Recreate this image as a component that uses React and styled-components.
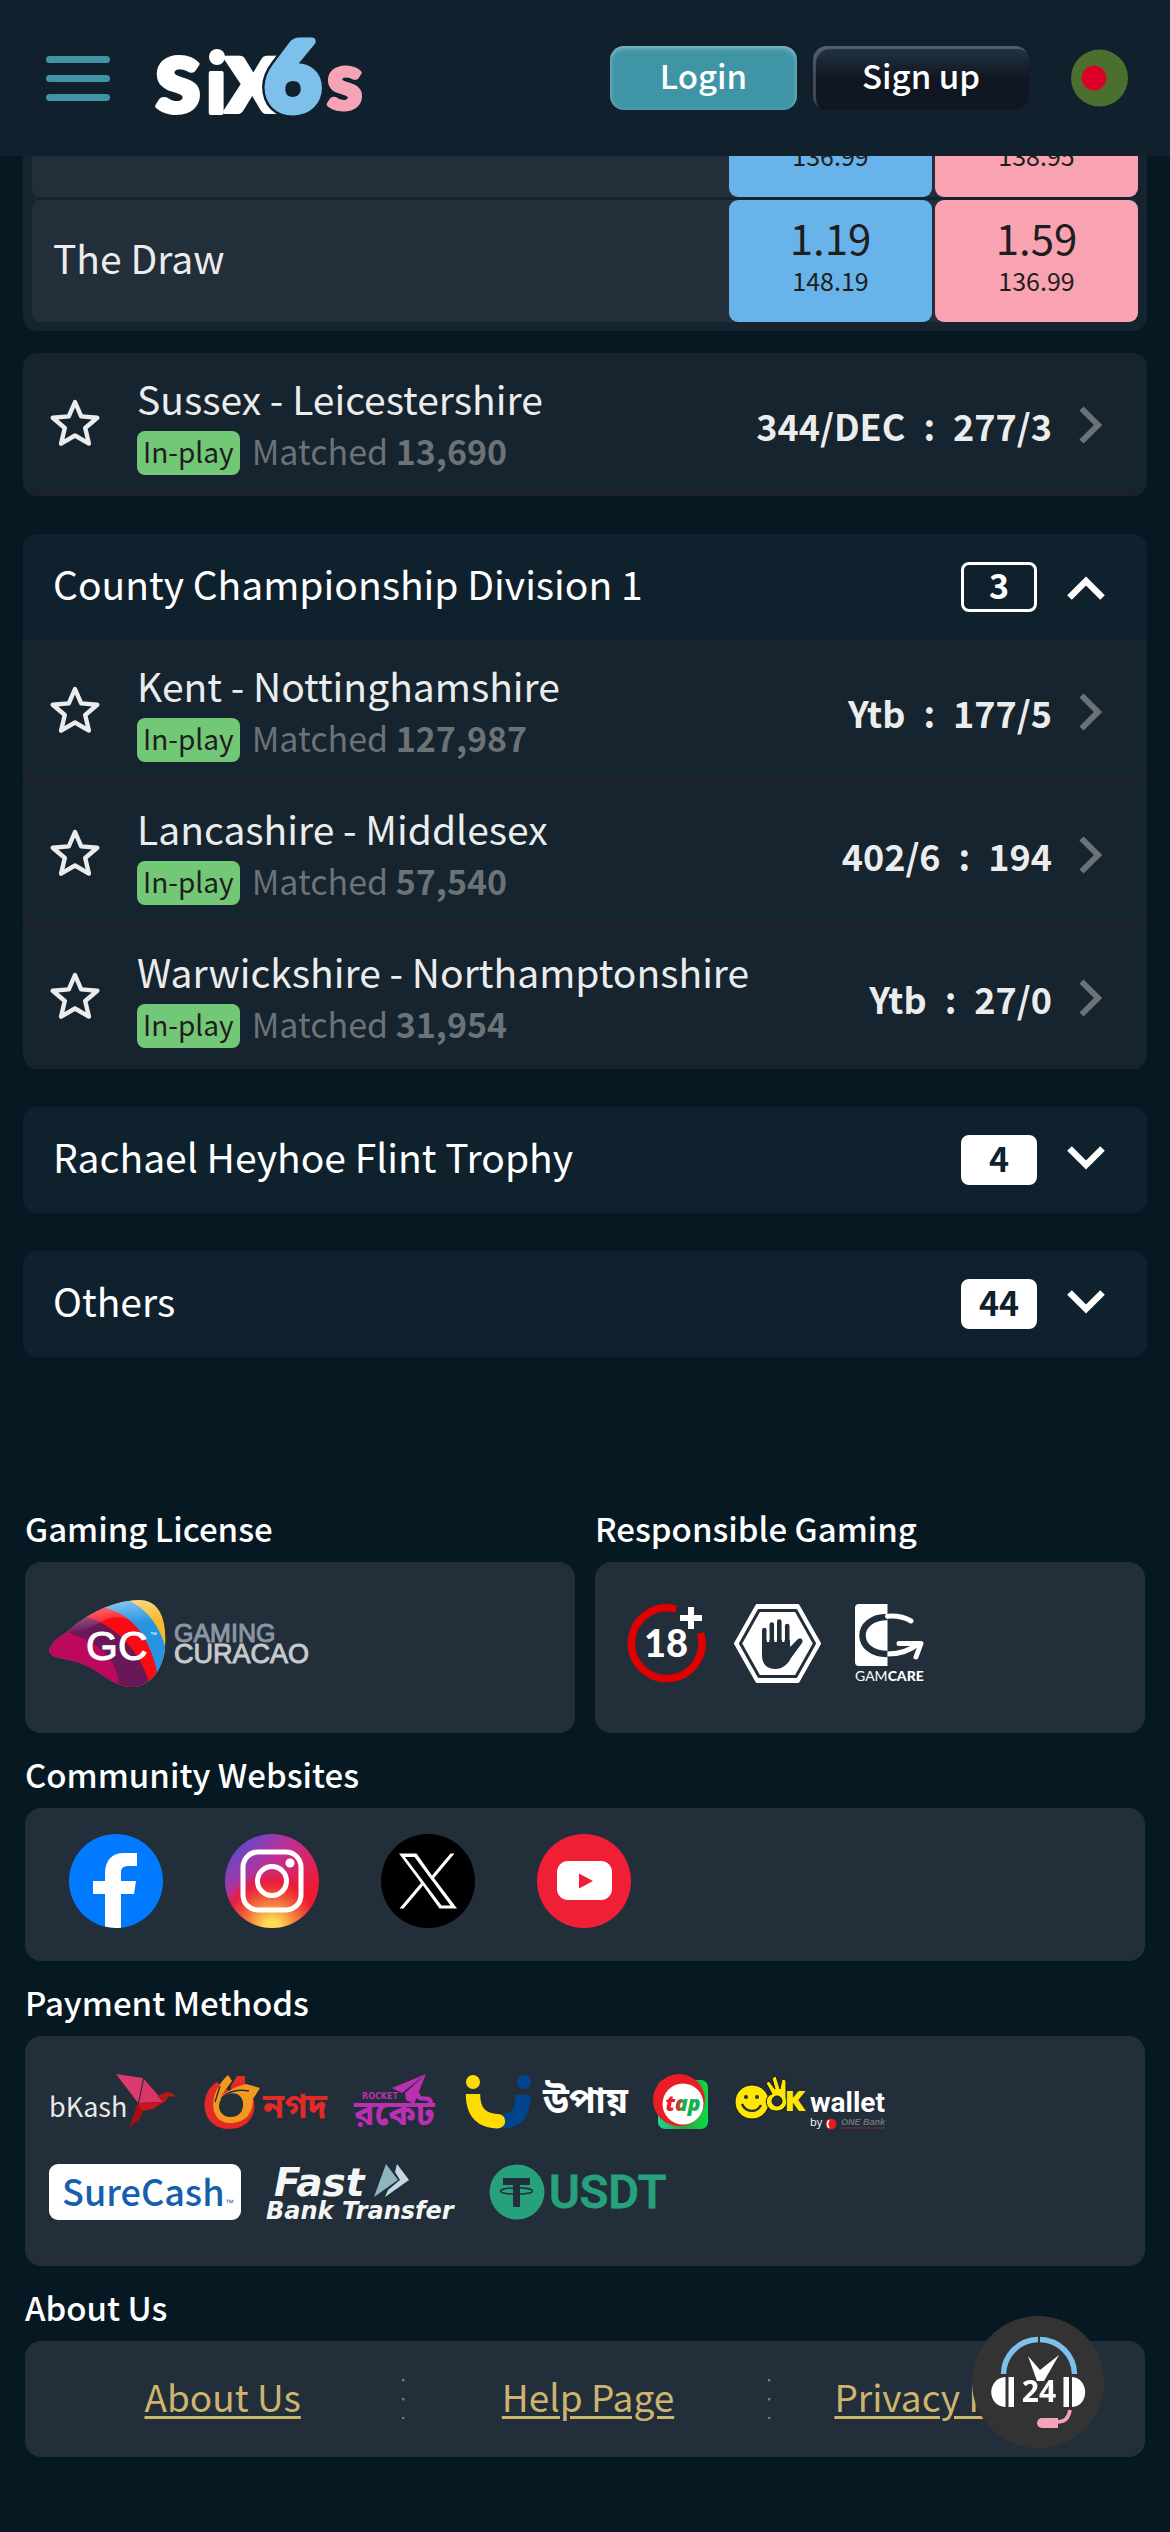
import React, { useState } from 'react';
import styled, { createGlobalStyle } from 'styled-components';

const GlobalStyle = createGlobalStyle`
  * {
    box-sizing: border-box;
  }

  body {
    margin: 0;
    background: #061822;
    color: #ffffff;
    font-family: 'Noto Sans CJK SC', 'Noto Sans', sans-serif;
  }

  button {
    margin: 0;
    padding: 0;
    border: 0;
    background: none;
    color: inherit;
    font: inherit;
    cursor: pointer;
  }

  svg {
    display: block;
    flex: none;
    overflow: visible;
  }
`;

const Header = styled.header`
  position: fixed;
  top: 0;
  left: 0;
  right: 0;
  z-index: 10;
  height: 156px;
  padding: 0 42px 0 46px;
  display: flex;
  align-items: center;
  background: #10212d;
`;

const MenuButton = styled.button`
  width: 64px;
  display: flex;
  flex-direction: column;
  gap: 12px;

  span {
    height: 7px;
    border-radius: 4px;
    background: #3f95a6;
  }
`;

const LogoLink = styled.a`
  margin-left: 46px;
`;

const HeaderActions = styled.div`
  margin-left: auto;
  display: flex;
  align-items: center;
  gap: 16px;
`;

const HeaderButton = styled.button`
  width: ${({ $wide }) => ($wide ? '216px' : '187px')};
  height: 64px;
  padding-bottom: 6px;
  border-radius: 14px;
  font-size: 33px;
  font-weight: 500;
  line-height: 58px;
  background: ${({ $wide }) =>
    $wide ? 'linear-gradient(180deg, #223643 0%, #111722 50%)' : '#3f95a6'};
  box-shadow: ${({ $wide }) =>
    $wide
      ? 'inset 3px 3px 1px rgba(255, 255, 255, 0.22)'
      : 'inset 0 2px 5px rgba(255, 255, 255, 0.4)'};
`;

const LanguageButton = styled.button`
  margin-left: 26px;
`;

const Main = styled.main`
  padding: 75px 23px 0;
`;

const MarketCard = styled.section`
  padding: 0 9px 9px;
  display: flex;
  flex-direction: column;
  gap: 3px;
  border-radius: 14px;
  background: #15242e;
`;

const MarketRow = styled.div`
  display: flex;
  align-items: center;
  gap: 3px;
  border-radius: 8px;
  background: #222e39;
`;

const Runner = styled.span`
  flex: 1;
  padding: 0 21px 8px;
  color: #ececec;
  font-size: 39px;
  line-height: 48px;
`;

const OddsButton = styled.button`
  width: 203px;
  height: 122px;
  padding-top: 13px;
  display: flex;
  flex-direction: column;
  align-items: center;
  gap: 4px;
  border-radius: 9px;
  background: ${({ $side }) => ($side === 'back' ? '#69b3eb' : '#f9a2b2')};
  color: #1e1e1e;
`;

const Price = styled.span`
  font-size: 42px;
  line-height: 48px;
`;

const Stake = styled.span`
  font-size: 25px;
  line-height: 30px;
`;

const MatchList = styled.ul`
  margin: ${({ $spaced }) => ($spaced ? '22px 0 0' : '0')};
  padding: 0;
  list-style: none;
  overflow: hidden;
  border-radius: ${({ $spaced }) => ($spaced ? '14px' : '0')};
`;

const MatchItem = styled.li`
  padding: 0 44px 0 27px;
  display: flex;
  align-items: center;
  gap: 37px;
  border-bottom: 3px solid #1f2025;
  background: #15242e;
`;

const MatchLink = styled.a`
  flex: 1;
  padding: 21px 0 18px;
  display: flex;
  align-items: center;
  color: #ececec;
  text-decoration: none;
`;

const MatchInfo = styled.div`
  flex: 1;
`;

const MatchTitle = styled.div`
  font-size: 39px;
  line-height: 48px;
`;

const MatchMeta = styled.div`
  margin-top: 9px;
  display: flex;
  align-items: flex-start;
  gap: 12px;
  color: #6c7276;
  font-size: 34px;
  line-height: 40px;
`;

const InPlay = styled.span`
  height: 44px;
  padding: 0 6px;
  border-radius: 8px;
  background: #73c877;
  color: #1e1e1e;
  font-size: 28px;
`;

const Score = styled.div`
  margin-right: 27px;
  display: flex;
  gap: 18px;
  font-size: 36px;
  font-weight: 700;
  line-height: 48px;
`;

const League = styled.section`
  margin-top: 38px;
  overflow: hidden;
  border-radius: 14px;
`;

const LeagueButton = styled.button`
  width: 100%;
  height: 106px;
  padding: 0 42px 0 30px;
  display: flex;
  align-items: center;
  gap: 30px;
  background: #10212e;
  text-align: left;
`;

const LeagueName = styled.span`
  flex: 1;
  padding-bottom: 8px;
  font-size: 39px;
  line-height: 48px;
`;

const Count = styled.span`
  width: 76px;
  height: 50px;
  border: 3px solid #ffffff;
  border-radius: 8px;
  background: ${({ $open }) => ($open ? 'transparent' : '#ffffff')};
  color: ${({ $open }) => ($open ? '#ffffff' : '#10212e')};
  font-size: 34px;
  font-weight: 700;
  line-height: 40px;
  text-align: center;
`;

const Footer = styled.footer`
  padding: 130px 25px 75px;
`;

const FooterColumns = styled.div`
  display: grid;
  grid-template-columns: 1fr 1fr;
  gap: 20px;
`;

const FooterTitle = styled.h2`
  margin: 0;
  padding: 17px 0 10px;
  font-size: 33px;
  font-weight: 500;
  line-height: 48px;
`;

const Panel = styled.div`
  padding: ${({ $padding }) => $padding || '38px 24px 46px'};
  display: flex;
  align-items: center;
  gap: ${({ $gap }) => $gap || '0'};
  border-radius: 16px;
  background: #222e39;
`;

const PaymentPanel = styled(Panel)`
  flex-direction: column;
  align-items: flex-start;
  gap: 34px;
`;

const PaymentRow = styled.div`
  display: flex;
  flex-wrap: wrap;
  gap: 25px;
`;

const AboutPanel = styled.nav`
  padding: 38px 9px 38px 15px;
  display: grid;
  grid-template-columns: repeat(3, 1fr);
  border-radius: 16px;
  background: #222e39;
`;

const AboutCell = styled.div`
  height: 40px;
  display: flex;
  justify-content: center;
  background: ${({ $divided }) =>
    $divided
      ? `radial-gradient(circle at 1px 1px, #6f7d88 1px, transparent 2px) right top / 3px 19px repeat-y`
      : 'none'};

  a {
    color: #cdb46f;
    font-size: 37px;
    line-height: 34px;
    text-underline-offset: 4px;
    text-decoration-thickness: 3px;
  }
`;

const SupportButton = styled.button`
  position: fixed;
  right: 66px;
  bottom: 84px;
  z-index: 20;
  border-radius: 50%;
`;

const SiteLogo = () => (
  <svg width="212" height="76" viewBox="0 0 212 76" role="img" aria-label="six6s">
    <g fontFamily="Lato, sans-serif" fontWeight="900" strokeLinejoin="round">
      <g fill="#ffffff" stroke="#ffffff" strokeWidth="4">
        <text x="-1" y="72" fontSize="104">s</text>
        <text x="50" y="73" fontSize="78">ı</text>
        <text x="69" y="72" fontSize="104">x</text>
      </g>
      <circle cx="61" cy="17" r="8" fill="#ffffff" />
      <g fontSize="96">
        <text x="109" y="71" fill="#10212d" stroke="#10212d" strokeWidth="13">6</text>
        <text x="109" y="71" fill="#7cc0eb" stroke="#7cc0eb" strokeWidth="8">6</text>
      </g>
      <text x="171" y="69" fontSize="80" fill="#f5a3b6" stroke="#f5a3b6" strokeWidth="4">s</text>
    </g>
  </svg>
);

const FlagIcon = () => (
  <svg width="57" height="58" viewBox="0 0 57 58">
    <circle cx="28.5" cy="29" r="28.5" fill="#4a6f2e" />
    <circle cx="23" cy="29" r="12.3" fill="#dc0028" />
  </svg>
);

const StarIcon = () => (
  <svg width="50" height="48" viewBox="0 0 50 48" fill="none" stroke="#ececec" strokeWidth="4.4" strokeLinejoin="round">
    <path d="M25 3 31.2 17.4 47.3 18.7 35.2 29 38.9 44.6 25 36.5 11.1 44.6 14.8 29 2.7 18.7 18.8 17.4Z" />
  </svg>
);

const ArrowIcon = () => (
  <svg width="24" height="38" viewBox="0 0 24 38" fill="none" stroke="#6c7276" strokeWidth="6">
    <path d="M2.5 2.5 19 19 2.5 35.5" />
  </svg>
);

const CaretIcon = ({ open }) => (
  <svg width="38" height="30" viewBox="0 0 38 30" fill="none" stroke="#ffffff" strokeWidth="6.5">
    <path d={open ? 'M2.5 25.5 19 9 35.5 25.5' : 'M2.5 3.5 19 20 35.5 3.5'} />
  </svg>
);

const GamingCuracaoLogo = () => (
  <svg width="270" height="87" viewBox="0 0 270 87" role="img" aria-label="Gaming Curacao">
    <defs>
      <clipPath id="gcShape">
        <path d="M1 53C-2 47 8 38 17 33 36 15 62 1 90 0 112 0 118 22 116 47 115 65 104 87 82 87 66 86 56 76 44 69 26 58 6 60 1 53Z" />
      </clipPath>
      <linearGradient id="gcShine" x1="0" y1="0" x2="0.2" y2="1">
        <stop offset="0" stopColor="#ffffff" stopOpacity="0.65" />
        <stop offset="0.4" stopColor="#ffffff" stopOpacity="0" />
      </linearGradient>
    </defs>
    <g clipPath="url(#gcShape)">
      <rect width="120" height="90" fill="#f7bb2a" />
      <path d="M78 0C98 8 112 28 117 50V90H0V0Z" fill="#2794e3" />
      <path d="M57 8C82 15 100 35 108 72V90H0V0Z" fill="#fb0a14" />
      <path d="M38 17C62 24 88 45 100 82V90H0V17Z" fill="#6a1757" />
      <path d="M18 32C45 42 70 54 70 90H0V32Z" fill="#bb0a5e" />
      <path d="M0 0H118V90H110C112 40 90 12 60 18L20 38H0Z" fill="url(#gcShine)" />
    </g>
    <g fontFamily="Liberation Sans, sans-serif">
      <text x="37" y="60" fontSize="41" fill="#ffffff" stroke="#ffffff">GC</text>
      <text x="101" y="37" fontSize="7" fill="#ffffff">™</text>
      <text x="125" y="42" fontSize="25" fill="#8b95a3" stroke="#8b95a3">GAMING</text>
      <text x="125" y="63" fontSize="27" fill="#c6cacb" stroke="#c6cacb">CURACAO</text>
    </g>
  </svg>
);

const AdultIcon = () => (
  <svg width="78" height="79" viewBox="0 0 78 79" role="img" aria-label="18+">
    <path d="M49 5.2A35.3 35.3 0 1 0 73.5 29" fill="none" stroke="#e10000" strokeWidth="7.5" />
    <path d="M61 3h6v8h8v6h-8v8h-6v-8h-8v-6h8Z" fill="#ffffff" />
    <text x="39" y="53" textAnchor="middle" fontFamily="Lato, sans-serif" fontWeight="900" fontSize="38" fill="#ffffff">18</text>
  </svg>
);

const StopHandIcon = () => (
  <svg width="92" height="79" viewBox="0 0 92 79">
    <path d="M23 1.5H64L85.5 39.5 64 77.5H23L1.5 39.5Z" fill="#ffffff" stroke="#ffffff" strokeWidth="3" strokeLinejoin="round" />
    <path d="M25 6.5H62L80.5 39.5 62 72.5H25L6.5 39.5Z" fill="#ffffff" stroke="#222e39" strokeWidth="3" strokeLinejoin="round" />
    <g fill="#222e39" stroke="#222e39" strokeLinecap="round">
      <path d="M28 36V51C28 60 33 65 41 65 49 65 54 60 57 54L68 39C70 35 66 33 63 36L56 43V36Z" stroke="none" />
      <path d="M30.3 26V40M37.8 20.5V40M45.3 17.5V40M53.2 22V40" strokeWidth="4.6" fill="none" />
    </g>
    <path d="M34 28V38M41.6 22V38M49.3 24V38" stroke="#ffffff" strokeWidth="2.4" />
  </svg>
);

const GamCareLogo = () => (
  <svg width="70" height="79" viewBox="0 0 70 79" role="img" aria-label="GamCare">
    <path d="M4 0H32.5V62H4Q0 62 0 58V4Q0 0 4 0Z" fill="#ffffff" />
    <g fill="none" strokeWidth="5">
      <path d="M32.5 13C16 13 7.5 22 7.5 31.5S16 50 32.5 50" stroke="#222e39" strokeWidth="6.5" />
      <path d="M32.5 12.3C42 11.5 50 13.5 56 17" stroke="#ffffff" strokeLinecap="round" />
      <path d="M32.5 50C46 50 56 46 64 39" stroke="#ffffff" />
      <path d="M44 39.5H66L61 53" stroke="#ffffff" strokeLinecap="round" strokeLinejoin="round" />
    </g>
    <text x="0" y="77" fontFamily="Lato, sans-serif" fontSize="14" fill="#ffffff">
      GAM<tspan fontWeight="900">CARE</tspan>
    </text>
  </svg>
);

const FacebookIcon = () => (
  <svg width="94" height="94" viewBox="0 0 94 94">
    <circle cx="47" cy="47" r="47" fill="#007aff" />
    <path d="M36 92.6V60H24V47H36V40C36 26 43 19 55 19H68V32H60C54 32 52 34 52 39V47H67L65 60H52V93.7A47 47 0 0 1 36 92.6Z" fill="#ffffff" />
  </svg>
);

const InstagramIcon = () => (
  <svg width="94" height="94" viewBox="0 0 94 94">
    <defs>
      <linearGradient id="igBase" x1="0.1" y1="0" x2="0.8" y2="0.7">
        <stop offset="0" stopColor="#4a50dc" />
        <stop offset="0.5" stopColor="#c02f94" />
        <stop offset="1" stopColor="#ef1a38" />
      </linearGradient>
      <radialGradient id="igGlow" cx="0.5" cy="1" r="0.62">
        <stop offset="0.12" stopColor="#fddf55" />
        <stop offset="0.5" stopColor="#f3673a" />
        <stop offset="0.8" stopColor="#ee1a2c" stopOpacity="0.75" />
        <stop offset="1" stopColor="#ee1a2c" stopOpacity="0" />
      </radialGradient>
    </defs>
    <circle cx="47" cy="47" r="47" fill="url(#igBase)" />
    <circle cx="47" cy="47" r="47" fill="url(#igGlow)" />
    <g fill="none" stroke="#ffffff" strokeWidth="5">
      <rect x="18" y="18" width="58" height="58" rx="15" />
      <circle cx="47" cy="47" r="14.5" />
    </g>
    <circle cx="65" cy="29" r="4.5" fill="#ffffff" />
  </svg>
);

const XIcon = () => (
  <svg width="94" height="94" viewBox="0 0 94 94">
    <circle cx="47" cy="47" r="47" fill="#000000" />
    <path
      d="M18 19.5H35.5L51 41.5 69.5 19.5H73.5L53 44 76 74.5H58.5L42 51.5 22.5 74.5H18.5L40 49ZM24 23 60.5 71.5H69.5L33.5 23Z"
      fill="#ffffff"
      fillRule="evenodd"
    />
  </svg>
);

const YoutubeIcon = () => (
  <svg width="94" height="94" viewBox="0 0 94 94">
    <circle cx="47" cy="47" r="47" fill="#f01f35" />
    <rect x="20" y="27" width="55" height="39" rx="11" fill="#ffffff" />
    <path d="M42 39.5 56 47 42 54.5Z" fill="#f01f35" />
  </svg>
);

const BkashLogo = () => (
  <svg width="129" height="56" viewBox="0 0 129 56" role="img" aria-label="bKash">
    <text x="0" y="43" fontFamily="Noto Sans CJK SC, sans-serif" fontSize="27" fill="#e6e8ea">bKash</text>
    <path d="M67 3 77 16 72 10Z" fill="#a40f12" />
    <path d="M67 0 94 4 89 29Z" fill="#dd3a6e" />
    <path d="M95 5 115 28 90 29Z" fill="#d8356a" />
    <path d="M90 29 115 28 104 35 87 38Z" fill="#c4161c" />
    <path d="M88 31 80 54 91 45 94 37Z" fill="#a40f12" />
    <path d="M115 29 108 22 117 18 123 19 127 23 120 22Z" fill="#b5181c" />
  </svg>
);

const NagadLogo = () => (
  <svg width="126" height="56" viewBox="0 0 126 56" role="img" aria-label="Nagad">
    <path d="M14 8C-6 20-2 55 26 55 44 55 54 42 51 26L42 24 30 20Z" fill="#e42a26" />
    <path d="M28 12 34 2 42 2V14L28 22Z" fill="#e42a26" />
    <path d="M25 1 29 7 18 22C32 12 38 12 43 10L57 14 50 25C50 40 42 49 27 49 6 49 4 20 25 1Z" fill="#f39a1e" />
    <path d="M17 27C24 16 38 17 40 28 41 38 35 43 28 43 18 43 14 35 17 27Z" fill="#222e39" />
    <path d="M12 28 17 12M18 25C24 17 36 15 46 17" fill="none" stroke="#222e39" strokeWidth="1.4" />
    <text x="60" y="44" fontFamily="Noto Sans Bengali, Noto Sans, sans-serif" fontWeight="700" fontSize="34" fill="#e42a26">নগদ</text>
  </svg>
);

const RocketLogo = () => (
  <svg width="86" height="56" viewBox="0 0 86 56" role="img" aria-label="Rocket">
    <g fill="#bb30b3">
      <path d="M72 0 38 14 48 19Z" />
      <path d="M72 0 51 19 52 26 60 30Z" />
      <text x="8" y="25" fontFamily="DejaVu Sans, sans-serif" fontWeight="700" fontSize="8">ROCKET</text>
      <text x="0" y="51" fontFamily="Noto Sans Bengali, Noto Sans, sans-serif" fontWeight="700" fontSize="34">রকেট</text>
    </g>
  </svg>
);

const UpayLogo = () => (
  <svg width="162" height="56" viewBox="0 0 162 56" role="img" aria-label="Upay">
    <circle cx="59" cy="8" r="7" fill="#02458f" />
    <path d="M58 21C58 38 52 47 38 47" fill="none" stroke="#02458f" strokeWidth="15" />
    <circle cx="8" cy="8" r="7" fill="#ffdc00" />
    <path d="M0.8 20H15.2C15 33 20 39.5 33 40A7.2 7.2 0 0 1 33 54.4C12 54 0.8 42 0.8 20Z" fill="#ffdc00" />
    <text x="78" y="39" fontFamily="Noto Sans Bengali, Noto Sans, sans-serif" fontWeight="700" fontSize="36" fill="#ffffff">উপায়</text>
  </svg>
);

const TapLogo = () => (
  <svg width="58" height="56" viewBox="0 0 58 56" role="img" aria-label="tap">
    <defs>
      <linearGradient id="tapText" x1="0" x2="1">
        <stop offset="0.3" stopColor="#ec1c24" />
        <stop offset="0.55" stopColor="#12b04a" />
      </linearGradient>
      <linearGradient id="tapBase" x1="0" x2="1">
        <stop offset="0" stopColor="#15d89b" />
        <stop offset="0.5" stopColor="#3a9c3a" />
        <stop offset="1" stopColor="#08dc45" />
      </linearGradient>
    </defs>
    <rect x="6" y="6" width="50" height="49" rx="7" fill="url(#tapBase)" />
    <circle cx="27" cy="26" r="26" fill="#ec1c24" />
    <circle cx="31" cy="30" r="20.5" fill="#ffffff" />
    <text x="31" y="37" textAnchor="middle" fontFamily="Open Sans, sans-serif" fontWeight="800" fontStyle="italic" fontSize="21" fill="url(#tapText)">tap</text>
  </svg>
);

const OkWalletLogo = () => (
  <svg width="152" height="56" viewBox="0 0 152 56" role="img" aria-label="OK Wallet by ONE Bank">
    <g stroke="#111a20" strokeWidth="1">
      <circle cx="17" cy="28" r="17" fill="#ffe600" />
      <path d="M36 36C29 31 30 22 37 20L31 9 34 7 40 15 37 4 41 2 45 15 47 5 51 6 51 24C54 32 47 38 40 37Z" fill="#ffe600" />
      <circle cx="42" cy="27" r="5" fill="#222e39" />
    </g>
    <text x="51" y="36" fontFamily="Lato, sans-serif" fontWeight="900" fontSize="25" fill="#ffe600" stroke="#ffe600" strokeWidth="2">K</text>
    <circle cx="11" cy="23" r="2" fill="#222e39" />
    <circle cx="22" cy="23" r="2" fill="#222e39" />
    <path d="M7 30C11 39 22 39 26 31" fill="none" stroke="#222e39" strokeWidth="2.4" />
    <text x="75" y="38" fontFamily="Roboto, sans-serif" fontWeight="700" fontSize="28" fill="#ffffff">wallet</text>
    <text x="75" y="52" fontFamily="Open Sans, sans-serif" fontSize="11" fill="#ffffff">by</text>
    <circle cx="96" cy="50" r="5.5" fill="#e31b23" />
    <path d="M94 46Q91 50 94 54" fill="none" stroke="#ffffff" strokeWidth="1.6" />
    <text x="106" y="51" fontFamily="Liberation Sans, sans-serif" fontWeight="700" fontStyle="italic" fontSize="9" fill="#6c747c">ONE Bank</text>
    <path d="M106 54H150" stroke="#803038" strokeWidth="1" />
  </svg>
);

const SureCashLogo = () => (
  <svg width="192" height="56" viewBox="0 0 192 56" role="img" aria-label="SureCash">
    <rect width="192" height="56" rx="9" fill="#ffffff" />
    <text x="13" y="42" fontFamily="Noto Sans CJK SC, sans-serif" fontWeight="500" fontSize="36" fill="#155fae">SureCash</text>
    <text x="176" y="42" fontFamily="Liberation Sans, sans-serif" fontSize="9" fill="#155fae">™</text>
  </svg>
);

const FastBankLogo = () => (
  <svg width="198" height="56" viewBox="0 0 198 56" role="img" aria-label="Fast Bank Transfer">
    <g fontFamily="DejaVu Sans, sans-serif" fontWeight="700" fontStyle="italic" fill="#f4f6f6">
      <text x="8" y="32" fontSize="39">Fast</text>
      <text x="0" y="55" fontSize="24">Bank Transfer</text>
    </g>
    <path d="M120 0 132 16 108 33Z" fill="#8fb6bf" />
    <path d="M131 0 143 16 119 33 122 26 134 16 129 8Z" fill="#c5dade" />
  </svg>
);

const UsdtLogo = () => (
  <svg width="180" height="56" viewBox="0 0 180 56" role="img" aria-label="USDT">
    <circle cx="28" cy="28" r="27.5" fill="#26a17b" />
    <path d="M14 14H41V21H31V43H24V21H14Z" fill="#222e39" />
    <ellipse cx="27.5" cy="27" rx="16" ry="3.2" fill="none" stroke="#222e39" strokeWidth="1.4" />
    <text x="60" y="44" fontFamily="Roboto, sans-serif" fontWeight="500" fontSize="47" fill="#26a17b" stroke="#26a17b">USDT</text>
  </svg>
);

const SupportIcon = () => (
  <svg width="132" height="132" viewBox="0 0 132 132">
    <circle cx="66" cy="66" r="66" fill="#333333" />
    <g fill="none" stroke="#7cc0eb" strokeWidth="5.5">
      <path d="M31.5 58C32 39 47 24 66 23.5" />
      <path d="M68 23.5C87 24 102 39 102.5 58" />
    </g>
    <g fill="#ffffff">
      <path d="M33.5 61V91C14 90 15 62 33.5 61Z" />
      <path d="M36.5 61H42V91H36.5Z" />
      <path d="M91.5 61H97V91H91.5Z" />
      <path d="M100 61V91C118 90 117 62 100 61Z" />
      <path d="M56 40 68 54 87 39 72 65H65Z" />
      <text x="67" y="86" textAnchor="middle" fontFamily="Open Sans, sans-serif" fontWeight="700" fontSize="30">24</text>
    </g>
    <path d="M70 102H86V112H70A5 5 0 0 1 70 102Z" fill="#f5a3b6" />
    <path d="M85 106C93 106 97 101 98 94" fill="none" stroke="#f5a3b6" strokeWidth="3.6" />
  </svg>
);

const runners = [
  { name: '', back: ['1.17', '136.99'], lay: ['1.21', '138.95'] },
  { name: 'The Draw', back: ['1.19', '148.19'], lay: ['1.59', '136.99'] },
];

const featured = [
  { teams: 'Sussex - Leicestershire', matched: '13,690', home: '344/DEC', away: '277/3' },
];

const leagues = [
  {
    name: 'County Championship Division 1',
    count: 3,
    matches: [
      { teams: 'Kent - Nottinghamshire', matched: '127,987', home: 'Ytb', away: '177/5' },
      { teams: 'Lancashire - Middlesex', matched: '57,540', home: '402/6', away: '194' },
      { teams: 'Warwickshire - Northamptonshire', matched: '31,954', home: 'Ytb', away: '27/0' },
    ],
  },
  { name: 'Rachael Heyhoe Flint Trophy', count: 4, matches: [] },
  { name: 'Others', count: 44, matches: [] },
];

const socials = [
  { name: 'Facebook', Icon: FacebookIcon },
  { name: 'Instagram', Icon: InstagramIcon },
  { name: 'X', Icon: XIcon },
  { name: 'YouTube', Icon: YoutubeIcon },
];

const aboutLinks = ['About Us', 'Help Page', 'Privacy Policy'];

const Odds = ({ side, value }) => (
  <OddsButton type="button" $side={side}>
    <Price>{value[0]}</Price>
    <Stake>{value[1]}</Stake>
  </OddsButton>
);

const Matches = ({ items, spaced }) => (
  <MatchList $spaced={spaced}>
    {items.map((match) => (
      <MatchItem key={match.teams}>
        <button type="button" aria-label={`Add ${match.teams} to favourites`}>
          <StarIcon />
        </button>
        <MatchLink href="#match">
          <MatchInfo>
            <MatchTitle>{match.teams}</MatchTitle>
            <MatchMeta>
              <InPlay>In-play</InPlay>
              <span>
                Matched <b>{match.matched}</b>
              </span>
            </MatchMeta>
          </MatchInfo>
          <Score>
            <span>{match.home}</span>
            <span>:</span>
            <span>{match.away}</span>
          </Score>
          <ArrowIcon />
        </MatchLink>
      </MatchItem>
    ))}
  </MatchList>
);

const LeagueSection = ({ league }) => {
  const [open, setOpen] = useState(league.matches.length > 0);

  return (
    <League>
      <LeagueButton type="button" aria-expanded={open} onClick={() => setOpen(!open)}>
        <LeagueName>{league.name}</LeagueName>
        <Count $open={open}>{league.count}</Count>
        <CaretIcon open={open} />
      </LeagueButton>
      {open && <Matches items={league.matches} />}
    </League>
  );
};

const App = () => {
  return (
    <>
      <GlobalStyle />
      <Header>
        <MenuButton type="button" aria-label="Menu">
          <span />
          <span />
          <span />
        </MenuButton>
        <LogoLink href="#home">
          <SiteLogo />
        </LogoLink>
        <HeaderActions>
          <HeaderButton type="button">Login</HeaderButton>
          <HeaderButton type="button" $wide>
            Sign up
          </HeaderButton>
          <LanguageButton type="button" aria-label="Language">
            <FlagIcon />
          </LanguageButton>
        </HeaderActions>
      </Header>

      <Main>
        <MarketCard>
          {runners.map((runner) => (
            <MarketRow key={runner.name}>
              <Runner>{runner.name}</Runner>
              <Odds side="back" value={runner.back} />
              <Odds side="lay" value={runner.lay} />
            </MarketRow>
          ))}
        </MarketCard>
        <Matches items={featured} spaced />
        {leagues.map((league) => (
          <LeagueSection key={league.name} league={league} />
        ))}
      </Main>

      <Footer>
        <FooterColumns>
          <section>
            <FooterTitle>Gaming License</FooterTitle>
            <Panel>
              <GamingCuracaoLogo />
            </Panel>
          </section>
          <section>
            <FooterTitle>Responsible Gaming</FooterTitle>
            <Panel $padding="42px 32px 50px" $gap="29px">
              <AdultIcon />
              <StopHandIcon />
              <GamCareLogo />
            </Panel>
          </section>
        </FooterColumns>

        <FooterTitle>Community Websites</FooterTitle>
        <Panel $padding="26px 44px 33px" $gap="62px">
          {socials.map(({ name, Icon }) => (
            <a key={name} href="#community" aria-label={name}>
              <Icon />
            </a>
          ))}
        </Panel>

        <FooterTitle>Payment Methods</FooterTitle>
        <PaymentPanel>
          <PaymentRow>
            <BkashLogo />
            <NagadLogo />
            <RocketLogo />
            <UpayLogo />
            <TapLogo />
            <OkWalletLogo />
          </PaymentRow>
          <PaymentRow>
            <SureCashLogo />
            <FastBankLogo />
            <UsdtLogo />
          </PaymentRow>
        </PaymentPanel>

        <FooterTitle>About Us</FooterTitle>
        <AboutPanel>
          {aboutLinks.map((label, index) => (
            <AboutCell key={label} $divided={index < aboutLinks.length - 1}>
              <a href="#about">{label}</a>
            </AboutCell>
          ))}
        </AboutPanel>
      </Footer>

      <SupportButton type="button" aria-label="24 hour support">
        <SupportIcon />
      </SupportButton>
    </>
  );
};

export default App;
